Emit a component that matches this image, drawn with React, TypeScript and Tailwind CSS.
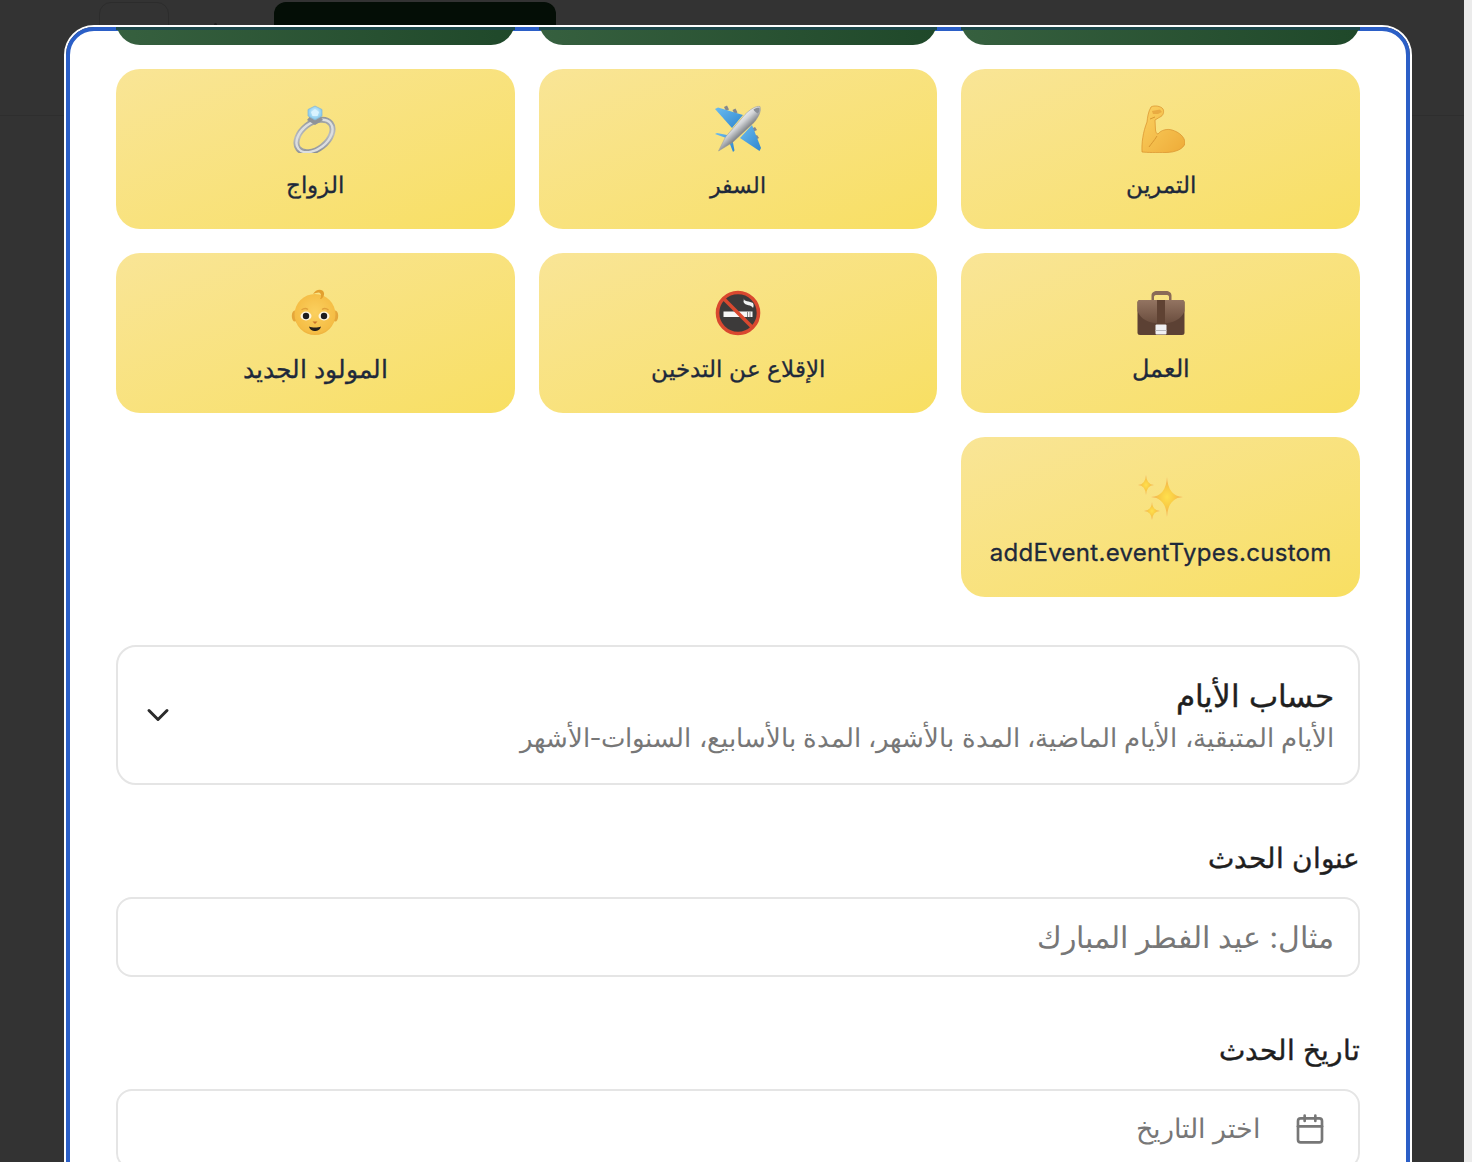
import React from 'react';
import { Calendar, ChevronDown } from 'lucide-react';

const Ring = () => (
  <svg viewBox="0 0 48 48" className="w-12 h-12">
    <defs>
      <radialGradient id="ringGem" cx="0.5" cy="0.45" r="0.6">
        <stop offset="0" stopColor="#e6f8ff" />
        <stop offset="1" stopColor="#6fc0ec" />
      </radialGradient>
      <linearGradient id="ringMetal" x1="0" y1="1" x2="1" y2="0">
        <stop offset="0" stopColor="#7f8388" />
        <stop offset="0.5" stopColor="#b9bcc0" />
        <stop offset="1" stopColor="#8b8f94" />
      </linearGradient>
    </defs>
    <ellipse cx="23.5" cy="31" rx="20.5" ry="13" transform="rotate(-38 23.5 31)" fill="none" stroke="url(#ringMetal)" strokeWidth="6" />
    <ellipse cx="23.5" cy="31" rx="20.5" ry="13" transform="rotate(-38 23.5 31)" fill="none" stroke="#dcdee0" strokeWidth="2.4" />
    <path d="M16 15 L24 20 L32 15 L28 10 L20 10 Z" fill="#8f9398" />
    <path d="M24 1 L31 4.5 L31 11 L24 15 L17 11 L17 4.5 Z" fill="url(#ringGem)" stroke="#8db9d2" strokeWidth="0.8" />
    <path d="M24 4 L28 7 L26.5 11 L21.5 11 L20 7 Z" fill="#d9f3ff" />
  </svg>
);

const Plane = () => (
  <svg viewBox="0 0 48 48" className="w-12 h-12">
    <defs>
      <linearGradient id="planeBody" gradientUnits="userSpaceOnUse" x1="20" y1="14" x2="31" y2="26">
        <stop offset="0" stopColor="#ffffff" />
        <stop offset="0.5" stopColor="#d2d4d7" />
        <stop offset="1" stopColor="#7d8186" />
      </linearGradient>
      <linearGradient id="planeWing" x1="0" y1="0" x2="1" y2="1">
        <stop offset="0" stopColor="#6bbcf0" />
        <stop offset="1" stopColor="#2f86cf" />
      </linearGradient>
    </defs>
    <path d="M10 2 L13 0.5 L15 4.5 L12 6 Z M18.5 5 L21.5 3.5 L23.5 7.5 L20.5 9 Z" fill="#85888c" />
    <path d="M37 24 L41 22 L43 25 L39 27 Z M39 32 L43 30 L45 33 L41 35 Z" fill="#85888c" />
    <path d="M1 4 L4 2.5 L29 10 L18 23 Z" fill="url(#planeWing)" />
    <path d="M45.5 46 L47 43 L38 20 L26 33 Z" fill="url(#planeWing)" />
    <path d="M1 29 L3 28 L13 30 L15 34 Z M19 47 L20.5 45.5 L18.5 35 L14 34 Z" fill="url(#planeWing)" />
    <path d="M46 1.5 C47.5 6 44.5 12 40 17.5 L18.5 37.5 L4.5 46 L11.5 32 L31 9.5 C36 4.5 42 0.5 46 1.5 Z" fill="url(#planeBody)" stroke="#93969a" strokeWidth="0.5" />
    <path d="M39.5 4.5 C41.5 3 44 2.5 45.5 3 C45.8 5 45 7 44 8.5 C42.5 8 40.5 6.5 39.5 4.5 Z" fill="#8a8f96" />
  </svg>
);

const Muscle = () => (
  <svg viewBox="0 0 48 48" className="w-12 h-12">
    <defs>
      <linearGradient id="muscleSkin" x1="0" y1="0" x2="1" y2="1">
        <stop offset="0" stopColor="#fbd160" />
        <stop offset="1" stopColor="#eeab38" />
      </linearGradient>
    </defs>
    <path d="M14 2 C17 0 24 1 26 4 C27.5 7 26 11 23 12 L18 15 L18.5 25 C19 27.5 19.5 29 21 29 C24 25 30 23.5 35 25 C42 27 48 32 48 38 C47 44 38 47.5 29 47.5 C20 47.8 10 47.5 5 47 C4.5 38 6 27 10 17 C10.5 13 11 7 14 2 Z" fill="url(#muscleSkin)" stroke="#d98f2b" strokeWidth="0.7" />
    <path d="M15 6 L23 4.5 L25 7 L21 9 L16 9 Z" fill="#e9ab42" />
    <path d="M18 12 L13 14 M12 42 C14 39 17 36 20 31" fill="none" stroke="#d4922e" strokeWidth="0.9" />
  </svg>
);

const Briefcase = () => (
  <svg viewBox="0 0 48 48" className="w-12 h-12">
    <defs>
      <linearGradient id="caseBody" x1="0" y1="0" x2="0" y2="1">
        <stop offset="0" stopColor="#937461" />
        <stop offset="1" stopColor="#6a4d3e" />
      </linearGradient>
    </defs>
    <path d="M14.5 11 L14.5 6.5 C14.5 3.5 17 2 20 2 L29 2 C32 2 34.5 3.5 34.5 6.5 L34.5 11 L32 11 L32 8 C32 6.5 31 6 29 6 L20 6 C18 6 17 6.5 17 8 L17 11 Z" fill="#8a6a57" />
    <rect x="0.5" y="11" width="47" height="35" rx="2.5" fill="#5c4134" />
    <path d="M0.5 13.5 C0.5 12 1.5 11 3 11 L45 11 C46.5 11 47.5 12 47.5 13.5 L47.5 22 C45 30 36 34.5 24 34.5 C12 34.5 3 30 0.5 22 Z" fill="url(#caseBody)" />
    <rect x="20" y="11" width="8" height="25" fill="#5f4233" />
    <rect x="18.5" y="35.5" width="11" height="10" rx="1" fill="#f0f0f2" />
    <rect x="18.5" y="41" width="11" height="1" fill="#b9b9bd" />
  </svg>
);

const NoSmoking = () => (
  <svg viewBox="0 0 48 48" className="w-12 h-12">
    <circle cx="24" cy="24" r="20.5" fill="#3c3a3a" stroke="#d9482f" strokeWidth="3.6" />
    <rect x="9.5" y="22.5" width="29" height="5.5" fill="#f6f6f6" />
    <rect x="33" y="22.5" width="1" height="5.5" fill="#8a8a8a" />
    <rect x="35.5" y="22.5" width="1" height="5.5" fill="#8a8a8a" />
    <path d="M30 9 C29 13 36 12 39 14 C40 16 39.5 18 39 19 C38 15.5 31 17 29.5 13 Z" fill="#f2f2f2" />
    <path d="M9.5 9.5 L38.5 38.5" stroke="#d9482f" strokeWidth="3.6" />
  </svg>
);

const Baby = () => (
  <svg viewBox="0 0 48 48" className="w-12 h-12">
    <defs>
      <radialGradient id="babyFace" cx="0.5" cy="0.45" r="0.62">
        <stop offset="0" stopColor="#fbd05f" />
        <stop offset="0.8" stopColor="#f5bd45" />
        <stop offset="1" stopColor="#e4a332" />
      </radialGradient>
    </defs>
    <ellipse cx="3.8" cy="27" rx="3" ry="5.5" fill="#e5a63a" />
    <ellipse cx="44.2" cy="27" rx="3" ry="5.5" fill="#e5a63a" />
    <circle cx="24" cy="25.5" r="20.5" fill="url(#babyFace)" />
    <path d="M22 5 C25 -0.5 32 -0.5 33 4 C33.5 7 31 10.5 29 10 C31 7 30 3.5 27.5 3.5 C25.5 3.5 24 4.5 22 5 Z" fill="#e3a02f" />
    <path d="M10.5 21 C12.5 19.5 15.5 19.5 17 20.5 M31 20.5 C32.5 19.5 35.5 19.5 37.5 21" fill="none" stroke="#e0a03a" strokeWidth="1.4" />
    <ellipse cx="15" cy="27" rx="5.5" ry="4.4" fill="#fff6df" />
    <ellipse cx="33" cy="27" rx="5.5" ry="4.4" fill="#fff6df" />
    <circle cx="15" cy="27" r="3.2" fill="#1d1d1f" />
    <circle cx="33" cy="27" r="3.2" fill="#1d1d1f" />
    <path d="M21.5 32.5 L26.5 32.5 L24 35 Z" fill="#c9742b" />
    <path d="M18 37.5 C21 38.8 27 38.8 30 37.5 C29 41 26.5 42 24 42 C21.5 42 19 41 18 37.5 Z" fill="#26201c" />
  </svg>
);

const Sparkles = () => (
  <svg viewBox="0 0 48 48" className="w-12 h-12">
    <defs>
      <radialGradient id="sparkFill" cx="0.5" cy="0.5" r="0.5">
        <stop offset="0" stopColor="#ffe04d" />
        <stop offset="0.45" stopColor="#f9cc45" />
        <stop offset="1" stopColor="#f2a95c" />
      </radialGradient>
    </defs>
    <path d="M30 4 Q31 23 46 24 Q31 25 30 44 Q29 25 14 24 Q29 23 30 4 Z" fill="url(#sparkFill)" />
    <path d="M9 2 Q9.6 11.4 17 12 Q9.6 12.6 9 22 Q8.4 12.6 1 12 Q8.4 11.4 9 2 Z" fill="url(#sparkFill)" />
    <path d="M15 29 Q15.6 37.4 23 38 Q15.6 38.6 15 47 Q14.4 38.6 7 38 Q14.4 37.4 15 29 Z" fill="url(#sparkFill)" />
  </svg>
);

const eventTypes = [
  { label: 'التمرين', icon: <Muscle />, size: 'text-[23px]' },
  { label: 'السفر', icon: <Plane />, size: 'text-[22px]' },
  { label: 'الزواج', icon: <Ring />, size: 'text-[22.5px]' },
  { label: 'العمل', icon: <Briefcase />, size: 'text-[24px]' },
  { label: 'الإقلاع عن التدخين', icon: <NoSmoking />, size: 'text-[23px]' },
  { label: 'المولود الجديد', icon: <Baby />, size: 'text-[24.5px]' },
  { label: 'addEvent.eventTypes.custom', icon: <Sparkles />, size: 'text-[24px] tracking-[0.28px]' },
];

export default function App() {
  return (
    <div dir="ltr" className="relative flex h-[1162px] w-full overflow-hidden bg-[#333333] font-['Inter','Noto_Sans',sans-serif]">
      {/* dimmed page behind the dialog */}
      <div className="flex-1">
        <div className="flex h-[116px] items-start border-b border-[#2e2e2e] pl-[99px] pt-[2px]">
          <div className="h-12 w-[70px] rounded-xl border border-[#2c2c2c]" />
          <div className="ml-[45px] mt-[21px] h-1 w-[3px] rounded-full bg-[#1f1f1f]" />
          <div className="ml-[57px] h-[60px] w-[282px] rounded-xl bg-[#040e06]" />
        </div>
      </div>
      <div className="w-2 bg-[#ebebeb]" />

      {/* dialog */}
      <div className="absolute left-[64px] top-[25px] h-[1200px] w-[1348px] rounded-[30px] border-2 border-white">
        <div dir="rtl" className="h-full rounded-[28px] border-4 border-[#2b5fc7] bg-white px-[46px]">
          <div className="-mt-1 grid grid-cols-3 gap-6">
            {[0, 1, 2].map((i) => (
              <div key={i} className="relative flex h-[18px] items-end overflow-hidden">
                <div className="h-40 w-full shrink-0 rounded-3xl bg-gradient-to-r from-[#36603f] to-[#1f482a]" />
                <div className="absolute inset-x-0 top-0 h-[3px] bg-[#1e4a4c]" />
              </div>
            ))}
          </div>

          <div className="mt-6 grid grid-cols-3 gap-6">
            {eventTypes.map((t) => (
              <div key={t.label} className="flex h-40 flex-col items-center rounded-3xl bg-gradient-to-br from-[#f9e596] to-[#f8df62] pt-9">
                {t.icon}
                <span className={`mt-4 ${t.size} leading-8 text-[#1e293b] [-webkit-text-stroke:0.3px_#1e293b]`}>{t.label}</span>
              </div>
            ))}
          </div>

          <div className="mt-12 flex h-[140px] items-center justify-between rounded-[20px] border-2 border-[#e5e5e5] pl-[22px] pr-6">
            <div>
              <div className="text-[30.5px] leading-[46px] text-[#1f1f1f] [-webkit-text-stroke:0.4px_#1f1f1f]">حساب الأيام</div>
              <div className="text-[26px] leading-[38px] text-[#777777]">الأيام المتبقية، الأيام الماضية، المدة بالأشهر، المدة بالأسابيع، السنوات-الأشهر</div>
            </div>
            <ChevronDown size={36} strokeWidth={2} className="text-[#2b2b2b]" />
          </div>

          <div className="mb-[21px] mt-[55px] text-[27.5px] leading-9 text-[#1f1f1f] [-webkit-text-stroke:0.4px_#1f1f1f]">عنوان الحدث</div>
          <div className="flex h-20 items-center rounded-2xl border-2 border-[#e5e5e5] px-6 text-[29.5px] text-[#777777]">مثال: عيد الفطر المبارك</div>

          <div className="mb-[21px] mt-[55px] text-[27.5px] leading-9 text-[#1f1f1f] [-webkit-text-stroke:0.4px_#1f1f1f]">تاريخ الحدث</div>
          <div className="flex h-20 items-center gap-[33px] rounded-2xl border-2 border-[#e5e5e5] px-8 text-[26.5px] text-[#777777]">
            <Calendar size={32} strokeWidth={2} />
            <span>اختر التاريخ</span>
          </div>
        </div>
      </div>
    </div>
  );
}
